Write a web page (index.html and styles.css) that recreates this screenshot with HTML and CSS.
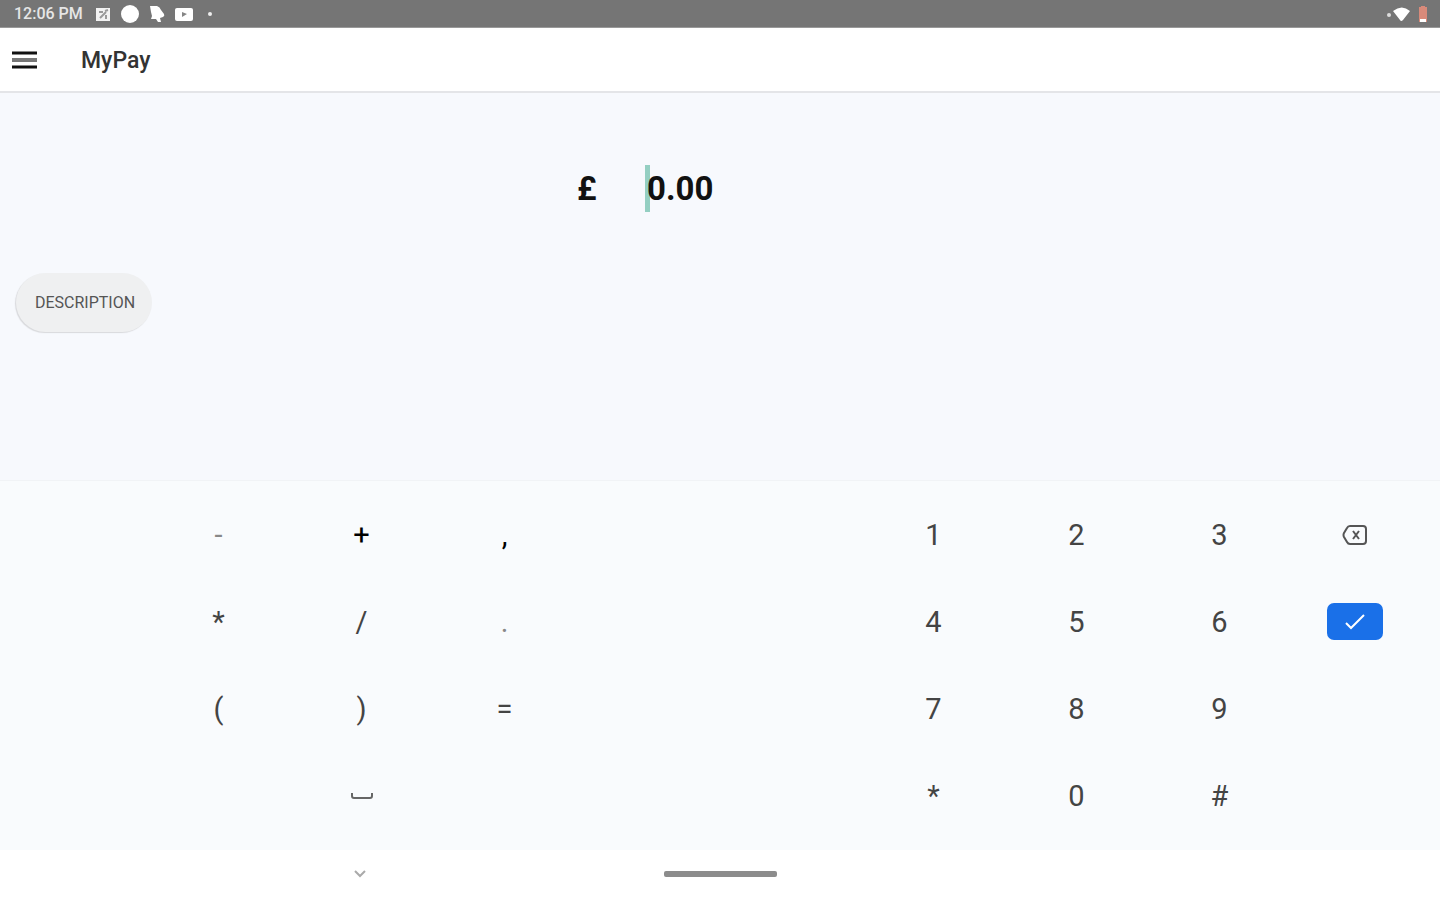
FILE: index.html
```
<!DOCTYPE html>
<html lang="en">
<head>
    <meta charset="UTF-8">
    <meta name="viewport" content="width=device-width, initial-scale=1.0">
    <title>MyPay</title>
    <link rel="stylesheet" href="styles.css">
</head>
<body>
    <div class="status-bar">
        <span class="time">12:06 PM</span>
        <svg class="icon-news" width="16" height="14" viewBox="0 0 16 14">
            <rect x="1" y="1" width="14" height="13" fill="#f2f2f2"/>
            <path d="M4 5h4M10 4l3-1M5 11l6-6M11 8v4" stroke="#9a9a9a" stroke-width="2" fill="none"/>
        </svg>
        <svg class="icon-circle" width="20" height="20" viewBox="0 0 20 20">
            <circle cx="10" cy="10" r="9" fill="#fff"/>
        </svg>
        <svg class="icon-bird" width="16" height="18" viewBox="0 0 16 18">
            <path d="M1 1h7q3 1 4 4l3 4q1 2-1 3l-3 1 1 4h-3l-2-3H2l1-3-1-4z" fill="#fff"/>
        </svg>
        <svg class="icon-video" width="20" height="14" viewBox="0 0 20 14">
            <rect x="1" y="1" width="18" height="13" rx="2" fill="#fff"/>
            <path d="M8 5l5 2-5 3z" fill="#858585"/>
        </svg>
        <span class="dot"></span>
        <svg class="icon-wifi" width="24" height="16" viewBox="0 0 24 16">
            <circle cx="3" cy="9" r="2" fill="#ddd"/>
            <path d="M7 5q9-7 17 0l-7 9q-2 2-3 0z" fill="#fff"/>
        </svg>
        <svg class="icon-battery" width="10" height="18" viewBox="0 0 10 18">
            <path d="M3 1h4v1h2v15H1V2h2z" fill="#d88a7a"/>
            <path d="M2 14h6v3H2z" fill="#fff"/>
        </svg>
    </div>

    <header class="app-bar">
        <button class="menu" type="button" aria-label="Menu">
            <svg width="25" height="20" viewBox="0 0 25 20">
                <path d="M0 3h25M0 17h25" stroke="#111" stroke-width="3"/>
                <path d="M0 10h25" stroke="#777" stroke-width="4"/>
            </svg>
        </button>
        <h1>MyPay</h1>
    </header>

    <main>
        <div class="amount">
            <label for="amount">£</label>
            <div class="amount-field">
                <input type="text" id="amount" value="0.00">
            </div>
        </div>
        <button class="description" type="button">DESCRIPTION</button>
    </main>

    <div class="keyboard">
        <button type="button" class="first-symbol light">-</button>
        <button type="button" class="dark">+</button>
        <button type="button" class="dark">,</button>
        <button type="button" class="first-number">1</button>
        <button type="button">2</button>
        <button type="button">3</button>
        <button type="button" aria-label="Delete">
            <svg width="26" height="22" viewBox="0 0 26 22" fill="none" stroke="#555" stroke-width="2">
                <path d="M8 2h13q3 0 3 3v12q0 3-3 3H8q-2 0-3-2l-3-5q-1-2 0-4l3-5q1-2 3-2z"/>
                <path d="M11 7l6 8M17 7l-6 8"/>
            </svg>
        </button>

        <button type="button" class="first-symbol">*</button>
        <button type="button">/</button>
        <button type="button" class="light">.</button>
        <button type="button" class="first-number">4</button>
        <button type="button">5</button>
        <button type="button">6</button>
        <button type="button" aria-label="Done">
            <span class="done">
                <svg width="22" height="18" viewBox="0 0 22 18">
                    <path d="M2 10l5 5L20 2" fill="none" stroke="#fff" stroke-width="2"/>
                </svg>
            </span>
        </button>

        <button type="button" class="first-symbol">(</button>
        <button type="button">)</button>
        <button type="button">=</button>
        <button type="button" class="first-number">7</button>
        <button type="button">8</button>
        <button type="button">9</button>

        <button type="button" class="space" aria-label="Space">
            <svg width="24" height="8" viewBox="0 0 24 8">
                <path d="M2 1v3q0 2 2 2h16q2 0 2-2V1" fill="none" stroke="#666" stroke-width="2"/>
            </svg>
        </button>
        <button type="button" class="first-number">*</button>
        <button type="button">0</button>
        <button type="button">#</button>
    </div>

    <nav class="nav-bar">
        <button type="button" class="hide" aria-label="Hide keyboard">
            <svg width="12" height="8" viewBox="0 0 12 8">
                <path d="M1 1l5 5 5-5" fill="none" stroke="#aaa" stroke-width="2"/>
            </svg>
        </button>
        <button type="button" class="home" aria-label="Home"></button>
    </nav>
</body>
</html>
```
FILE: styles.css
```
*{
    box-sizing: border-box;
    font-family: Roboto, "Liberation Sans", sans-serif;
}
body{
    margin: 0;
    min-height: 100vh;
    display: flex;
    flex-direction: column;
    background-color: #fff;
}
button{
    padding: 0;
    border: none;
    background: none;
}
svg{
    display: block;
}
.status-bar{
    height: 28px;
    padding: 0 12px 0 14px;
    display: flex;
    align-items: center;
    background-color: #757575;
    border-bottom: 1px solid #999;
}
.time{
    width: 81px;
    font-size: 16px;
    font-weight: 500;
    color: #e6e6e6;
}
.icon-circle,
.icon-bird,
.icon-video{
    margin-left: 9px;
}
.dot{
    width: 4px;
    height: 4px;
    margin-left: 14px;
    border-radius: 50%;
    background-color: #eee;
}
.icon-wifi{
    margin-left: auto;
}
.icon-battery{
    margin-left: 8px;
}
.app-bar{
    height: 65px;
    padding: 0 12px;
    display: flex;
    align-items: center;
    gap: 44px;
    background-color: #fff;
    border-bottom: 2px solid #e4e5e8;
}
.app-bar h1{
    margin: 0;
    padding-top: 2px;
    font-size: 23px;
    font-weight: 500;
    color: #333;
}
main{
    flex: 1;
    padding: 72px 16px 0;
    background-color: #f7f9fd;
}
.amount{
    display: flex;
    justify-content: center;
    align-items: center;
    gap: 50px;
    font-size: 33px;
    font-weight: 700;
    color: #111;
}
.amount label{
    width: 20px;
}
.amount-field{
    position: relative;
    width: 216px;
}
.amount-field::before{
    content: "";
    position: absolute;
    left: -2px;
    top: 0;
    width: 5px;
    height: 100%;
    background-color: #94cfc2;
}
.amount input{
    position: relative;
    display: block;
    width: 100%;
    height: 47px;
    padding: 0;
    border: none;
    outline: none;
    background: none;
    font-size: 33px;
    font-weight: 700;
    color: #111;
}
.description{
    display: block;
    width: 136px;
    height: 59px;
    margin-top: 61px;
    padding-left: 2px;
    border-radius: 30px;
    background-color: #eff0f1;
    box-shadow: -1px 1px 1px #d8d9dc;
    font-size: 16px;
    color: #555;
}
.keyboard{
    padding: 10px 21px 11px 147px;
    display: grid;
    grid-template-columns: repeat(8, 143fr) 128fr;
    grid-auto-rows: 87px;
    background-color: #f9fbfd;
    border-top: 1px solid #f1f3f6;
}
.keyboard button{
    display: flex;
    justify-content: center;
    align-items: center;
    font-size: 29px;
    color: #444;
}
.keyboard .dark{
    color: #000;
}
.keyboard .light{
    color: #888;
}
.first-symbol{
    grid-column: 1;
}
.space{
    grid-column: 2;
}
.first-number{
    grid-column: 6;
}
.done{
    width: 56px;
    height: 37px;
    display: flex;
    justify-content: center;
    align-items: center;
    border-radius: 7px;
    background-color: #1a70e8;
}
.nav-bar{
    height: 50px;
    padding-bottom: 2px;
    display: grid;
    grid-template-columns: 1fr 1fr;
    align-items: center;
    background-color: #fff;
}
.hide{
    grid-column: 1;
    grid-row: 1;
    justify-self: center;
}
.home{
    grid-column: 1 / 3;
    grid-row: 1;
    justify-self: center;
    width: 113px;
    height: 6px;
    border-radius: 2px;
    background-color: #8c8c8c;
}
```
